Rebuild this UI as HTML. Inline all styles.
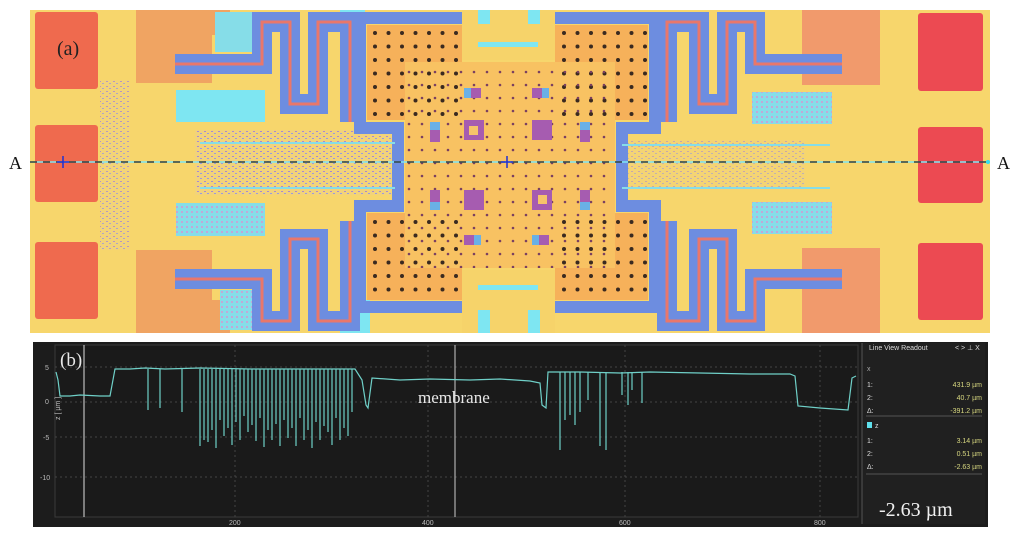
<!DOCTYPE html>
<html><head><meta charset="utf-8"><style>
html,body{margin:0;padding:0;background:#fff;width:1024px;height:537px;overflow:hidden}
svg{display:block}
</style></head><body>
<svg width="1024" height="537" viewBox="0 0 1024 537" xmlns="http://www.w3.org/2000/svg" font-family="Liberation Serif, serif">
<defs>
<pattern id="dots" x="371" y="29" width="13.5" height="13.5" patternUnits="userSpaceOnUse"><circle cx="4" cy="4" r="2" fill="#3a2a20"/></pattern>
<pattern id="dots2" x="405" y="68" width="13" height="13" patternUnits="userSpaceOnUse"><circle cx="4" cy="4" r="1.3" fill="#7a4060"/></pattern>
<pattern id="spk" width="7" height="5" patternUnits="userSpaceOnUse"><rect width="7" height="5" fill="#f2d37a"/><rect x="1" y="1" width="2" height="1" fill="#a88ad0"/><rect x="4" y="3" width="2" height="1" fill="#9a9ae0"/></pattern>
<pattern id="spk2" width="5" height="5" patternUnits="userSpaceOnUse"><rect width="5" height="5" fill="#86dde8"/><rect x="1" y="1" width="2" height="2" fill="#c0a8d8"/></pattern>
<g id="spring">
 <path d="M175 64 H262 V22 H290 V104 H318 V22 H350 V122" fill="none" stroke="#6d8de0" stroke-width="20"/>
 <path d="M175 64 H262 V22 H290 V104 H318 V22 H350 V122" fill="none" stroke="#e9776a" stroke-width="3"/>
</g>
</defs>
<rect x="30" y="10" width="960" height="323" fill="#f7d66c"/>
<rect x="35" y="12" width="63" height="77" fill="#ef6a4e" rx="3"/>
<rect x="35" y="125" width="63" height="77" fill="#ef6a4e" rx="3"/>
<rect x="35" y="242" width="63" height="77" fill="#ef6a4e" rx="3"/>
<rect x="136" y="10" width="76" height="73" fill="#f0a462"/>
<rect x="136" y="250" width="76" height="83" fill="#f0a462"/>
<rect x="212" y="10" width="18" height="25" fill="#f0a462"/>
<rect x="212" y="300" width="18" height="33" fill="#f0a462"/>
<rect x="918" y="13" width="65" height="78" fill="#ec4a52" rx="3"/>
<rect x="918" y="127" width="65" height="76" fill="#ec4a52" rx="3"/>
<rect x="918" y="243" width="65" height="77" fill="#ec4a52" rx="3"/>
<rect x="802" y="10" width="78" height="75" fill="#f19a6c"/>
<rect x="802" y="248" width="78" height="85" fill="#f19a6c"/>
<rect x="100" y="80" width="30" height="170" fill="url(#spk)" opacity=".8"/>
<rect x="195" y="130" width="200" height="65" fill="url(#spk)"/>
<rect x="625" y="140" width="180" height="50" fill="url(#spk)" opacity=".6"/>
<rect x="176" y="90" width="89" height="32" fill="#7ee6f2"/>
<rect x="176" y="203" width="89" height="33" fill="url(#spk2)"/>
<rect x="752" y="92" width="80" height="32" fill="url(#spk2)"/>
<rect x="752" y="202" width="80" height="32" fill="url(#spk2)"/>
<rect x="215" y="12" width="45" height="40" fill="#86dde8"/>
<rect x="220" y="290" width="40" height="40" fill="url(#spk2)"/>
<rect x="340" y="300" width="30" height="33" fill="#7ee6f2"/>
<rect x="340" y="10" width="25" height="20" fill="#7ee6f2"/>
<use href="#spring"/>
<use href="#spring" transform="translate(0,343) scale(1,-1)"/>
<use href="#spring" transform="translate(1017,0) scale(-1,1)"/>
<use href="#spring" transform="translate(1017,343) scale(-1,-1)"/>
<path d="M360 18 H655 V128 H622 V206 H655 V307 H360 V206 H398 V128 H360 Z" fill="none" stroke="#6d8de0" stroke-width="12"/>
<path d="M367 25 H462 V62 H555 V25 H648 V120 H615 V213 H648 V300 H555 V268 H462 V300 H367 V213 H405 V120 H367 Z" fill="#f6b15a"/>
<rect x="405" y="62" width="210" height="206" fill="#f8c262"/>
<rect x="367" y="25" width="95" height="95" fill="url(#dots)"/>
<rect x="555" y="25" width="93" height="95" fill="url(#dots)"/>
<rect x="367" y="213" width="95" height="87" fill="url(#dots)"/>
<rect x="555" y="213" width="93" height="87" fill="url(#dots)"/>
<rect x="405" y="62" width="210" height="206" fill="url(#dots2)"/>
<rect x="462" y="10" width="93" height="50" fill="#f6d36a"/>
<rect x="462" y="270" width="93" height="63" fill="#f6d36a"/>
<rect x="478" y="42" width="60" height="5" fill="#7ee6f2"/>
<rect x="478" y="285" width="60" height="5" fill="#7ee6f2"/>
<rect x="478" y="10" width="12" height="14" fill="#7ee6f2"/><rect x="528" y="10" width="12" height="14" fill="#7ee6f2"/>
<rect x="478" y="310" width="12" height="23" fill="#7ee6f2"/><rect x="528" y="310" width="12" height="23" fill="#7ee6f2"/>
<g fill="#a65cb0">
<rect x="464" y="88" width="17" height="10"/><rect x="532" y="88" width="17" height="10"/>
<rect x="430" y="122" width="10" height="20"/><rect x="580" y="122" width="10" height="20"/>
<rect x="464" y="120" width="20" height="20"/><rect x="532" y="120" width="20" height="20"/>
<rect x="430" y="190" width="10" height="20"/><rect x="580" y="190" width="10" height="20"/>
<rect x="464" y="190" width="20" height="20"/><rect x="532" y="190" width="20" height="20"/>
<rect x="464" y="235" width="17" height="10"/><rect x="532" y="235" width="17" height="10"/>
</g>
<g fill="#6ab0e6">
<rect x="464" y="88" width="7" height="10"/><rect x="542" y="88" width="7" height="10"/>
<rect x="430" y="122" width="10" height="8"/><rect x="580" y="122" width="10" height="8"/>
<rect x="430" y="202" width="10" height="8"/><rect x="580" y="202" width="10" height="8"/>
<rect x="469" y="126" width="9" height="9" fill="#f6c46a"/><rect x="538" y="195" width="9" height="9" fill="#f6c46a"/>
<rect x="474" y="235" width="7" height="10"/><rect x="532" y="235" width="7" height="10"/>
</g>
<line x1="200" y1="143" x2="395" y2="143" stroke="#86dde8" stroke-width="2"/>
<line x1="200" y1="188" x2="395" y2="188" stroke="#86dde8" stroke-width="2"/>
<line x1="622" y1="145" x2="830" y2="145" stroke="#86dde8" stroke-width="2"/>
<line x1="622" y1="188" x2="830" y2="188" stroke="#86dde8" stroke-width="2"/>
<line x1="30" y1="162" x2="988" y2="162" stroke="#7ee6f2" stroke-width="1.5"/>
<line x1="30" y1="162" x2="988" y2="162" stroke="#222" stroke-width="1.3" stroke-dasharray="7,6"/>
<path d="M57 162 H69 M63 156 V168 M501 162 H513 M507 156 V168" stroke="#2030d0" stroke-width="1.5"/>
<circle cx="988" cy="162" r="2" fill="#30e0f0"/>
<text x="9" y="169" font-size="18" fill="#111">A</text>
<text x="997" y="169" font-size="18" fill="#111">A</text>
<text x="57" y="55" font-size="20" fill="#222">(a)</text>

<rect x="33" y="342" width="955" height="185" fill="#1c1c1c"/>
<rect x="55" y="345" width="803" height="172" fill="#1a1a1a" stroke="#3a3a3a"/>
<g stroke="#444" stroke-dasharray="2,3" stroke-width="1">
<line x1="55" y1="367" x2="858" y2="367"/><line x1="55" y1="402" x2="858" y2="402"/>
<line x1="55" y1="437" x2="858" y2="437"/><line x1="55" y1="477" x2="858" y2="477"/>
<line x1="235" y1="345" x2="235" y2="517"/><line x1="428" y1="345" x2="428" y2="517"/>
<line x1="625" y1="345" x2="625" y2="517"/><line x1="820" y1="345" x2="820" y2="517"/>
</g>
<line x1="84" y1="345" x2="84" y2="517" stroke="#ddd" stroke-width="1"/>
<line x1="455" y1="345" x2="455" y2="517" stroke="#ccc" stroke-width="1"/>
<g fill="#bbb" font-family="Liberation Sans, sans-serif" font-size="7">
<text x="45" y="370">5</text><text x="45" y="404">0</text><text x="43" y="440">-5</text><text x="40" y="480">-10</text>
<text x="229" y="525">200</text><text x="422" y="525">400</text><text x="619" y="525">600</text><text x="814" y="525">800</text>
<text x="40" y="440" transform="rotate(-90 40 420)">z [ µm ]</text>
</g>
<polyline fill="none" stroke="#6fd0c8" stroke-width="1.2" points="56,372 58,380 60,396 70,396 80,395 100,396 110,396 115,369 130,369 145,368 165,369 200,368 250,369 300,369 340,369 355,369 362,380 366,405 368,408 372,378 400,380 430,379 470,380 500,379 530,381 540,383 542,405 546,408 548,372 580,372 620,373 650,372 700,373 750,374 790,374 795,376 798,406 820,408 848,410 852,378 856,376"/>
<g stroke="#6fd0c8" stroke-width="1.2">
<path d="M148 369V410M160 369V408M182 369V412M200 369V446M204 369V440M208 369V442M212 369V430M216 369V448M220 369V420M224 369V436M228 369V428M232 369V445M236 369V422M240 369V440M244 369V416M248 369V432M252 369V425M256 369V441M260 369V418M264 369V447M268 369V430M272 369V440M276 369V424M280 369V446M284 369V420M288 369V438M292 369V428M296 369V446M300 369V418M304 369V440M308 369V430M312 369V448M316 369V422M320 369V440M324 369V426M328 369V432M332 369V445M336 369V418M340 369V440M344 369V428M348 369V436M352 369V412"/>
<path d="M560 372V450M565 372V420M570 372V415M575 372V425M580 372V412M588 372V400M600 372V446M606 372V450M622 372V395M628 372V405M632 372V390M642 372V403"/>
</g>
<text x="418" y="403" font-size="17" fill="#e8e8e8">membrane</text>
<text x="60" y="366" font-size="19" fill="#e8e8e8">(b)</text>
<rect x="862" y="343" width="123" height="181" fill="#202020"/>
<line x1="862" y1="343" x2="862" y2="524" stroke="#555"/>
<g font-family="Liberation Sans, sans-serif" font-size="7" fill="#ddd">
<text x="869" y="350">Line View Readout</text><text x="955" y="350">&lt; &gt; ⊥ X</text>
<text x="867" y="371" fill="#aaa">x</text>
<text x="867" y="387">1:</text><text x="867" y="400">2:</text><text x="867" y="413">Δ:</text>
<text x="867" y="443">1:</text><text x="867" y="456">2:</text><text x="867" y="469">Δ:</text>
<text x="875" y="428">z</text>
</g>
<rect x="867" y="422" width="5" height="6" fill="#5fe0ec"/>
<g font-family="Liberation Sans, sans-serif" font-size="7" fill="#d8d880" text-anchor="end">
<text x="982" y="387">431.9 µm</text><text x="982" y="400">40.7 µm</text><text x="982" y="413">-391.2 µm</text>
<text x="982" y="443">3.14 µm</text><text x="982" y="456">0.51 µm</text><text x="982" y="469">-2.63 µm</text>
</g>
<line x1="866" y1="416" x2="982" y2="416" stroke="#555"/>
<line x1="866" y1="474" x2="982" y2="474" stroke="#555"/>
<text x="879" y="516" font-size="20" fill="#f0f0f0">-2.63 µm</text>
</svg>
</body></html>
